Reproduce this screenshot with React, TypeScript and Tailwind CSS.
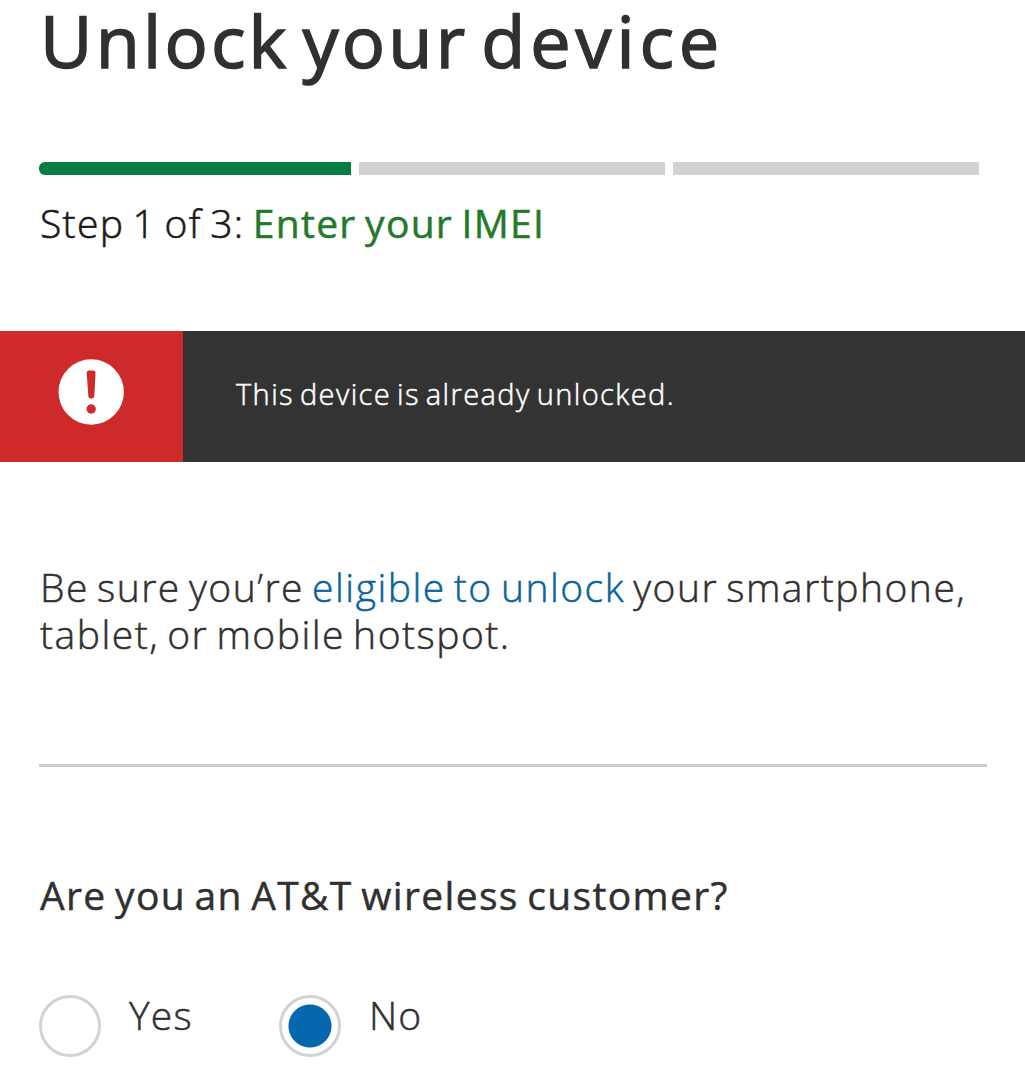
import { useState } from "react";

const steps = ["Enter your IMEI", "Verify your request", "Confirmation"];

export default function App() {
  const [customer, setCustomer] = useState("no");
  const currentStep = 0;

  return (
    <main className="h-[1080px] w-[1025px] overflow-hidden bg-white font-['Open_Sans','Noto_Sans',sans-serif] text-[#303030]">
      <h1 className="ml-[40px] h-[90px] whitespace-nowrap text-[72px] leading-[81px] tracking-[3.2px] [word-spacing:-9px] [-webkit-text-stroke:1.5px]">
        Unlock your <span className="tracking-[4.9px]">device</span>
      </h1>

      {/* step progress */}
      <div className="mt-[72px] ml-[39px] flex gap-2">
        {steps.map((step, index) => (
          <div
            key={step}
            className={index === currentStep ? "h-[13px] w-[312px] rounded-l-md bg-[#037d41]" : "h-[13px] w-[306px] bg-[#d2d2d2]"}
          />
        ))}
      </div>
      <p className="mt-[18px] ml-[40px] h-[62px] whitespace-nowrap text-[39px] leading-[60px] font-light tracking-[1.3px] text-[#191919] [word-spacing:-3px] [-webkit-text-stroke:0.6px]">
        Step 1 of 3:{" "}
        <span className="font-normal tracking-[1.3px] text-[#237a2b] [-webkit-text-stroke:0.5px]">{steps[currentStep]}</span>
      </p>

      {/* device status alert */}
      <div className="mt-[76px] flex h-[131px] bg-[#333333] text-white">
        <div className="w-[183px] bg-[#cf2a2a] pt-[28px] pl-[58px]">
          <svg width="66" height="66" viewBox="0 0 66 66">
            <circle cx="33.2" cy="33" r="32.7" fill="white" />
            <path d="M28.7 14q0-2.5 2.5-2.5h4q2.5 0 2.3 2.5l-1.2 23q-.2 2.5-3 2.5t-3-2.5z" fill="#cf2a2a" />
            <circle cx="33.2" cy="50" r="4.7" fill="#cf2a2a" />
          </svg>
        </div>
        <p className="pl-[53px] text-[29px] leading-[126px] font-light tracking-[1.4px] whitespace-nowrap [word-spacing:-3px] [-webkit-text-stroke:0.5px]">
          This device is already unlocked.
        </p>
      </div>

      <p className="mt-[101px] ml-[40px] text-[39px] leading-[47px] font-light tracking-[1.5px] whitespace-nowrap [word-spacing:-3.5px] [-webkit-text-stroke:0.5px]">
        Be sure you’re <a href="#eligibility" className="text-[#09639b]">eligible to unlock</a> your smartphone,
        <br />
        tablet, or mobile hotspot.
      </p>
      <hr className="mt-[107px] ml-[39px] w-[948px] border-t-[3px] border-[#cccccc]" />

      <div role="radiogroup" aria-labelledby="customer-question" className="ml-[39px] pt-[98px]">
        <p id="customer-question" className="ml-px h-[60px] text-[39px] leading-[60px] tracking-[1.35px] whitespace-nowrap [word-spacing:-3px] [-webkit-text-stroke:0.45px]">
          Are you an AT&T wireless customer?
        </p>
        <div className="mt-[70px] flex">
          {["yes", "no"].map((value) => (
            <label key={value} className="flex w-[240px] gap-7">
              <input
                type="radio"
                name="customer"
                checked={customer === value}
                onChange={() => setCustomer(value)}
                className="h-[62px] w-[62px] shrink-0 appearance-none rounded-full border-3 border-[#d2d2d2] checked:bg-[radial-gradient(circle,#0568ae_21px,white_22px)]"
              />
              <span className="text-[39px] leading-[40px] font-light tracking-[1.2px] [-webkit-text-stroke:0.5px]">{value === "yes" ? "Yes" : "No"}</span>
            </label>
          ))}
        </div>
      </div>
    </main>
  );
}
